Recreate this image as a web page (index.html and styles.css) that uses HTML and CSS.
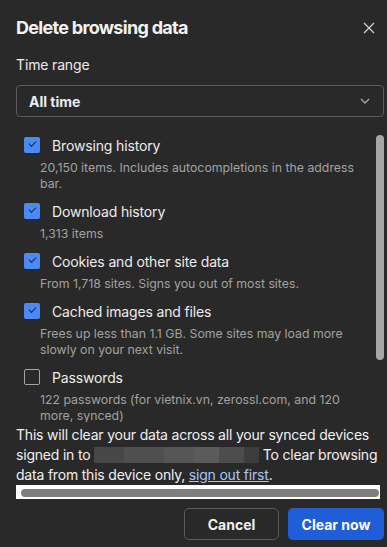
FILE: index.html
```html
<!DOCTYPE html>
<html lang="en">
<head>
    <meta charset="UTF-8">
    <meta name="viewport" content="width=device-width, initial-scale=1.0">
    <title>Delete browsing data</title>
    <link rel="stylesheet" href="styles.css">
</head>
<body>
    <div class="dialog">
        <div class="dialog-header">
            <h1>Delete browsing data</h1>
            <button class="close-button" aria-label="Close">
                <svg width="12" height="12" viewBox="0 0 12 12">
                    <path d="M1 1 L11 11 M11 1 L1 11" stroke="#cfcfcf" stroke-width="1.3" fill="none"/>
                </svg>
            </button>
        </div>

        <div class="field-label">Time range</div>
        <div class="select">
            <span>All time</span>
            <svg width="10" height="6" viewBox="0 0 10 6">
                <path d="M1 1 L5 5 L9 1" stroke="#a8a8a8" stroke-width="1.3" fill="none"/>
            </svg>
        </div>

        <div class="list">
            <div class="list-content">
                <div class="item">
                    <div class="item-row"><span class="checkbox checked"></span>Browsing history</div>
                    <div class="item-desc">20,150 items. Includes autocompletions in the address bar.</div>
                </div>
                <div class="item">
                    <div class="item-row"><span class="checkbox checked"></span>Download history</div>
                    <div class="item-desc">1,313 items</div>
                </div>
                <div class="item">
                    <div class="item-row"><span class="checkbox checked"></span>Cookies and other site data</div>
                    <div class="item-desc">From 1,718 sites. Signs you out of most sites.</div>
                </div>
                <div class="item">
                    <div class="item-row"><span class="checkbox checked"></span>Cached images and files</div>
                    <div class="item-desc">Frees up less than 1.1 GB. Some sites may load more slowly on your next visit.</div>
                </div>
                <div class="item">
                    <div class="item-row"><span class="checkbox"></span>Passwords</div>
                    <div class="item-desc">122 passwords (for vietnix.vn, zerossl.com, and 120 more, synced)</div>
                </div>
            </div>
            <div class="scrollbar"><div class="scroll-thumb"></div></div>
        </div>

        <p class="sync-note">This will clear your data across all your synced devices signed in to <span class="redacted"></span> To clear browsing data from this device only, <a href="#">sign out first</a>.</p>

        <div class="hscroll"><div class="hscroll-thumb"></div></div>

        <div class="actions">
            <button class="btn btn-cancel">Cancel</button>
            <button class="btn btn-primary">Clear now</button>
        </div>
    </div>
</body>
</html>
```

FILE: styles.css
```css
html, body {
    margin: 0;
    padding: 0;
    background-color: #292929;
}

body {
    font-family: Inter, "Noto Sans", sans-serif;
    color: #ececec;
    width: 387px;
    height: 547px;
    overflow: hidden;
}

.dialog {
    padding: 16px 3px 0 16px;
}

.dialog-header {
    display: flex;
    align-items: center;
    justify-content: space-between;
    height: 24px;
}

h1 {
    margin: 0;
    font-size: 18px;
    font-weight: 700;
    line-height: 24px;
    letter-spacing: -0.7px;
    color: #f2f2f2;
}

.close-button {
    background: none;
    border: none;
    padding: 0;
    margin-right: 8px;
    width: 14px;
    height: 14px;
    display: flex;
    align-items: center;
    justify-content: center;
    cursor: pointer;
}

.field-label {
    margin-top: 16px;
    font-size: 14px;
    line-height: 18px;
    letter-spacing: -0.15px;
}

.select {
    margin-top: 11px;
    height: 30px;
    border: 1px solid #5c5c5c;
    border-radius: 4px;
    display: flex;
    align-items: center;
    justify-content: space-between;
    padding: 0 13px 0 12px;
    font-size: 14px;
    font-weight: 700;
}

.list {
    margin-top: 8px;
    height: 297px;
    margin-bottom: 3px;
    display: flex;
    overflow: hidden;
}

.list-content {
    flex: 1;
    padding: 10px 16px 0 8px;
}

.item {
    margin-bottom: 9px;
}

.item-row {
    display: flex;
    align-items: center;
    height: 20px;
    font-size: 14px;
    letter-spacing: -0.15px;
}

.checkbox {
    width: 16px;
    height: 16px;
    box-sizing: border-box;
    border: 1px solid #a3a3a3;
    border-radius: 2px;
    margin-right: 12px;
    flex-shrink: 0;
}

.checkbox.checked {
    border: none;
    background-color: #4b8af5;
    position: relative;
}

.checkbox.checked::after {
    content: "";
    position: absolute;
    left: 5px;
    top: 4px;
    width: 6px;
    height: 3px;
    border-left: 1.6px solid #1b2a45;
    border-bottom: 1.6px solid #1b2a45;
    transform: rotate(-45deg);
}

.item-desc {
    margin-top: 5px;
    padding-left: 16px;
    font-size: 12.3px;
    line-height: 16px;
    color: #a2a2a2;
}

.scrollbar {
    width: 8px;
    padding-top: 10px;
}

.scroll-thumb {
    height: 225px;
    border-radius: 4px;
    background-color: #a6a6a6;
}

.sync-note {
    margin: 0;
    font-size: 14px;
    line-height: 20px;
    letter-spacing: -0.2px;
    color: #f0f0f0;
}

.redacted {
    display: inline-block;
    width: 165px;
    height: 16px;
    vertical-align: -3px;
    background: linear-gradient(90deg, #474747 0, #474747 30px, #4f4f4f 30px, #4f4f4f 70px, #565656 70px, #565656 100px, #5b5b5b 100px, #5b5b5b 125px, #4d4d4d 125px, #4d4d4d 150px, #3d3d3d 150px);
}

.sync-note a {
    color: #a9c5f5;
}

.hscroll {
    width: 364px;
    height: 14px;
    box-sizing: border-box;
    padding: 4px 1px 2px 5px;
    background-color: #ffffff;
}

.hscroll-thumb {
    height: 8px;
    border-radius: 4px;
    background-color: #7f7f7f;
}

.actions {
    display: flex;
    justify-content: flex-end;
    gap: 9px;
    margin-top: 9px;
}

.btn {
    height: 32px;
    border-radius: 5px;
    font-family: Inter, "Noto Sans", sans-serif;
    font-size: 14px;
    font-weight: 700;
    cursor: pointer;
}

.btn-cancel {
    width: 95px;
    background: transparent;
    border: 1px solid #5a5a5a;
    color: #f0f0f0;
}

.btn-primary {
    width: 96px;
    background-color: #1f5ed6;
    border: none;
    color: #ffffff;
}
```
